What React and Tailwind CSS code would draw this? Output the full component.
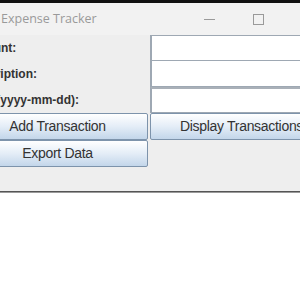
export default function App() {
  const field = "bg-white border border-[#9ea8b3] border-l-2";
  const btn =
    "flex items-center justify-center border border-[#7d93ab] rounded-[2px] bg-gradient-to-b from-[#ffffff] via-[#e4edf7] to-[#c3d6ea] text-[14px] tracking-[-0.3px] text-[#333333]";
  const label = "flex items-center text-[12px] font-bold text-[#333333]";
  return (
    <div className="w-[300px] h-[300px] bg-white overflow-hidden flex flex-col" style={{ fontFamily: '"Liberation Sans", Arial, sans-serif' }}>
      <div className="h-[3px] bg-[#111111] shrink-0" />
      <div className="h-[32px] shrink-0 bg-[#f2f2f2] flex items-center">
        <div className="w-[204px] pl-[1px] text-[12.5px] text-[#9a9a9a]" style={{ fontFamily: '"Open Sans", "Noto Sans", sans-serif' }}>
          Expense Tracker
        </div>
        <div className="w-[11px] h-[1px] bg-[#9a9a9a]" />
        <div className="ml-[38px] w-[11px] h-[11px] border border-[#9a9a9a]" />
      </div>
      <div className="h-[156px] shrink-0 bg-[#eeeeee] overflow-hidden">
        <div className="ml-[-33px] w-[366px] grid grid-cols-2 grid-rows-[26px_26px_26px_27px_27px_24px]">
          <div className={label}>Amount:</div>
          <div className={field} />
          <div className={label}>Description:</div>
          <div className={field + " border-t-0"} />
          <div className={label}>Date (yyyy-mm-dd):</div>
          <div className={field + " border-t-2 border-t-[#a9b0b8]"} />
          <div className={btn + " mr-[2px]"}>Add Transaction</div>
          <div className={btn}>Display Transactions</div>
          <div className={btn + " mr-[2px]"}>Export Data</div>
          <div />
          <div />
          <div />
        </div>
      </div>
      <div className="h-[1px] bg-[#555555] shrink-0" />
      <div className="h-[1px] bg-[#9a9a9a] shrink-0" />
      <div className="flex-1 bg-white" />
    </div>
  );
}
